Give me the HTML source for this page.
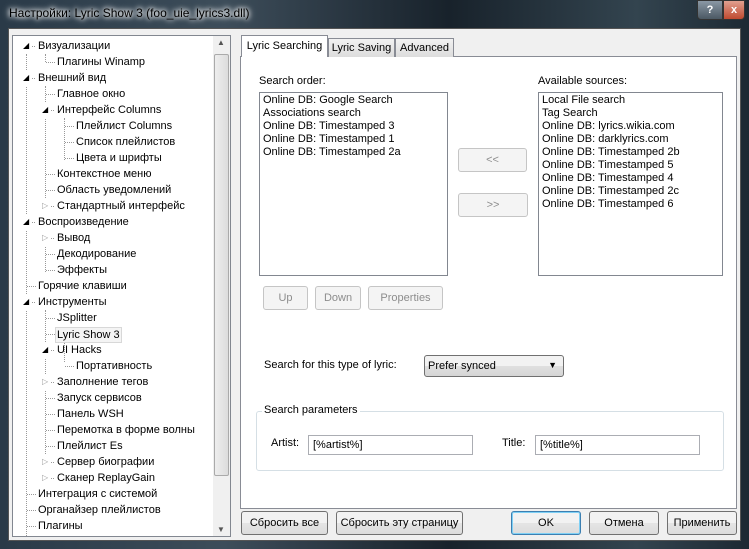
<!DOCTYPE html>
<html><head><meta charset="utf-8"><style>
*{box-sizing:border-box;margin:0;padding:0}
body{width:749px;height:549px;overflow:hidden;background:#1c2630;font-family:"Liberation Sans",sans-serif;font-size:11px;color:#000;position:relative}
.a{position:absolute}
.frame{left:0;top:0;width:749px;height:549px;background:linear-gradient(90deg,#2a3a48,#3d4d5a 30%,#18222b 60%,#33444f 85%,#1d2933)}
.title{left:9px;top:6px;color:#000;font-size:12px;text-shadow:0 0 8px #fff,0 0 6px #fff,0 0 4px #fff}
.body{left:8px;top:28px;width:733px;height:513px;background:#f0f0f0;border:1px solid #555}
.tree{left:12px;top:35px;width:219px;height:502px;background:#fff;border:1px solid #828790}
.ti{position:absolute;white-space:nowrap;line-height:16px;font-size:11px}
.ex{position:absolute;font-size:8px;line-height:16px;background:#fff}
.sb{left:213px;top:36px;width:17px;height:500px;background:#f0f0f0}
.thumb{left:214px;top:54px;width:15px;height:422px;background:linear-gradient(90deg,#eee,#dcdcdc);border:1px solid #aaa;border-radius:2px}
.panel{left:240px;top:56px;width:497px;height:453px;background:#fff;border:1px solid #898c95}
.tab{top:38px;height:19px;background:linear-gradient(#f2f2f2,#dcdcdc);border:1px solid #898c95;border-bottom:none;padding:3px 0 0;text-align:center;white-space:nowrap}
.list{background:#fff;border:1px solid #828790;padding:1px 3px;line-height:13px}
.btn{border:1px solid #acacac;border-radius:3px;background:linear-gradient(#f2f2f2 50%,#e5e5e5 50%,#dcdcdc);text-align:center;line-height:23px;white-space:nowrap}
.dis{color:#8d8d8d;background:#f4f4f4;border-color:#c5c5c5}
.inp{background:#fff;border:1px solid #abadb3;padding:3px 4px;line-height:13px}
.v{position:absolute;border-left:1px dotted #999;width:0}
.h{position:absolute;border-top:1px dotted #999;height:0}
</style></head><body>
<div class="a frame"></div>
<div class="a title">Настройки: Lyric Show 3 (foo_uie_lyrics3.dll)</div>
<div class="a" style="left:697px;top:0;width:26px;height:20px;border:1px solid #333;border-radius:0 0 0 4px;background:linear-gradient(#8a98a5,#4b5863);color:#fff;text-align:center;font-weight:bold;line-height:18px">?</div>
<div class="a" style="left:723px;top:0;width:22px;height:20px;border:1px solid #333;border-radius:0 0 4px 0;background:linear-gradient(#e0a090,#c04a30);color:#fff;text-align:center;font-weight:bold;line-height:18px">x</div>
<div class="a body"></div>
<div class="a tree"></div>
<div class="a" style="left:13px;top:36px;width:200px;height:500px;overflow:hidden">
<div class="v" style="left:13px;top:18px;height:482px"></div>
<div class="v" style="left:32px;top:18px;height:8px"></div>
<div class="v" style="left:32px;top:50px;height:122px"></div>
<div class="v" style="left:51px;top:82px;height:42px"></div>
<div class="v" style="left:32px;top:194px;height:42px"></div>
<div class="v" style="left:32px;top:274px;height:170px"></div>
<div class="v" style="left:51px;top:306px;height:20px"></div>
<div class="ex" style="left:10px;top:2px">◢</div><div class="h" style="left:19px;top:10px;width:3px"></div><div class="ti" style="left:25px;top:2px">Визуализации</div>
<div class="h" style="left:33px;top:26px;width:9px"></div><div class="ti" style="left:44px;top:18px">Плагины Winamp</div>
<div class="ex" style="left:10px;top:34px">◢</div><div class="h" style="left:19px;top:42px;width:3px"></div><div class="ti" style="left:25px;top:34px">Внешний вид</div>
<div class="h" style="left:33px;top:58px;width:9px"></div><div class="ti" style="left:44px;top:50px">Главное окно</div>
<div class="ex" style="left:29px;top:66px">◢</div><div class="h" style="left:38px;top:74px;width:3px"></div><div class="ti" style="left:44px;top:66px">Интерфейс Columns</div>
<div class="h" style="left:52px;top:90px;width:9px"></div><div class="ti" style="left:63px;top:82px">Плейлист Columns</div>
<div class="h" style="left:52px;top:106px;width:9px"></div><div class="ti" style="left:63px;top:98px">Список плейлистов</div>
<div class="h" style="left:52px;top:122px;width:9px"></div><div class="ti" style="left:63px;top:114px">Цвета и шрифты</div>
<div class="h" style="left:33px;top:138px;width:9px"></div><div class="ti" style="left:44px;top:130px">Контекстное меню</div>
<div class="h" style="left:33px;top:154px;width:9px"></div><div class="ti" style="left:44px;top:146px">Область уведомлений</div>
<div class="ex" style="left:29px;top:162px;color:#999">▷</div><div class="h" style="left:38px;top:170px;width:3px"></div><div class="ti" style="left:44px;top:162px">Стандартный интерфейс</div>
<div class="ex" style="left:10px;top:178px">◢</div><div class="h" style="left:19px;top:186px;width:3px"></div><div class="ti" style="left:25px;top:178px">Воспроизведение</div>
<div class="ex" style="left:29px;top:194px;color:#999">▷</div><div class="h" style="left:38px;top:202px;width:3px"></div><div class="ti" style="left:44px;top:194px">Вывод</div>
<div class="h" style="left:33px;top:218px;width:9px"></div><div class="ti" style="left:44px;top:210px">Декодирование</div>
<div class="h" style="left:33px;top:234px;width:9px"></div><div class="ti" style="left:44px;top:226px">Эффекты</div>
<div class="h" style="left:14px;top:250px;width:9px"></div><div class="ti" style="left:25px;top:242px">Горячие клавиши</div>
<div class="ex" style="left:10px;top:258px">◢</div><div class="h" style="left:19px;top:266px;width:3px"></div><div class="ti" style="left:25px;top:258px">Инструменты</div>
<div class="h" style="left:33px;top:282px;width:9px"></div><div class="ti" style="left:44px;top:274px">JSplitter</div>
<div class="h" style="left:33px;top:298px;width:9px"></div><div class="ti" style="left:42px;top:291px;line-height:14px;border:1px solid #d8d8d8;background:#f4f4f4;padding:0 1px">Lyric Show 3</div>
<div class="ex" style="left:29px;top:306px">◢</div><div class="h" style="left:38px;top:314px;width:3px"></div><div class="ti" style="left:44px;top:306px">UI Hacks</div>
<div class="h" style="left:52px;top:330px;width:9px"></div><div class="ti" style="left:63px;top:322px">Портативность</div>
<div class="ex" style="left:29px;top:338px;color:#999">▷</div><div class="h" style="left:38px;top:346px;width:3px"></div><div class="ti" style="left:44px;top:338px">Заполнение тегов</div>
<div class="h" style="left:33px;top:362px;width:9px"></div><div class="ti" style="left:44px;top:354px">Запуск сервисов</div>
<div class="h" style="left:33px;top:378px;width:9px"></div><div class="ti" style="left:44px;top:370px">Панель WSH</div>
<div class="h" style="left:33px;top:394px;width:9px"></div><div class="ti" style="left:44px;top:386px">Перемотка в форме волны</div>
<div class="h" style="left:33px;top:410px;width:9px"></div><div class="ti" style="left:44px;top:402px">Плейлист Es</div>
<div class="ex" style="left:29px;top:418px;color:#999">▷</div><div class="h" style="left:38px;top:426px;width:3px"></div><div class="ti" style="left:44px;top:418px">Сервер биографии</div>
<div class="ex" style="left:29px;top:434px;color:#999">▷</div><div class="h" style="left:38px;top:442px;width:3px"></div><div class="ti" style="left:44px;top:434px">Сканер ReplayGain</div>
<div class="h" style="left:14px;top:458px;width:9px"></div><div class="ti" style="left:25px;top:450px">Интеграция с системой</div>
<div class="h" style="left:14px;top:474px;width:9px"></div><div class="ti" style="left:25px;top:466px">Органайзер плейлистов</div>
<div class="h" style="left:14px;top:490px;width:9px"></div><div class="ti" style="left:25px;top:482px">Плагины</div>
</div>
<div class="a sb"></div>
<div class="a thumb"></div>
<div class="a" style="left:217px;top:38px;font-size:8px;color:#555">▲</div>
<div class="a" style="left:217px;top:525px;font-size:8px;color:#555">▼</div>

<div class="a panel"></div>
<div class="a tab" style="left:328px;width:67px">Lyric Saving</div>
<div class="a tab" style="left:395px;width:59px">Advanced</div>
<div class="a tab" style="left:241px;top:35px;height:22px;width:87px;background:#fff;padding-top:4px">Lyric Searching</div>

<div class="a" style="left:259px;top:75px">Search order:</div>
<div class="a" style="left:538px;top:75px">Available sources:</div>
<div class="a list" style="left:259px;top:92px;width:189px;height:184px">Online DB: Google Search<br>Associations search<br>Online DB: Timestamped 3<br>Online DB: Timestamped 1<br>Online DB: Timestamped 2a</div>
<div class="a list" style="left:538px;top:92px;width:185px;height:184px">Local File search<br>Tag Search<br>Online DB: lyrics.wikia.com<br>Online DB: darklyrics.com<br>Online DB: Timestamped 2b<br>Online DB: Timestamped 5<br>Online DB: Timestamped 4<br>Online DB: Timestamped 2c<br>Online DB: Timestamped 6</div>
<div class="a btn dis" style="left:458px;top:148px;width:69px;height:24px">&lt;&lt;</div>
<div class="a btn dis" style="left:458px;top:193px;width:70px;height:24px">&gt;&gt;</div>
<div class="a btn dis" style="left:263px;top:286px;width:45px;height:24px">Up</div>
<div class="a btn dis" style="left:315px;top:286px;width:46px;height:24px">Down</div>
<div class="a btn dis" style="left:368px;top:286px;width:75px;height:24px">Properties</div>

<div class="a" style="left:264px;top:359px">Search for this type of lyric:</div>
<div class="a" style="left:424px;top:355px;width:140px;height:22px;border:1px solid #707070;border-radius:3px;background:linear-gradient(#f2f2f2 50%,#e0e0e0 50%,#d5d5d5);padding:4px 3px">Prefer synced<span style="position:absolute;right:6px;top:4px;font-size:9px">▼</span></div>

<div class="a" style="left:256px;top:411px;width:468px;height:60px;border:1px solid #d5dfe5;border-radius:3px"></div>
<div class="a" style="left:262px;top:404px;background:#fff;padding:0 2px">Search parameters</div>
<div class="a" style="left:271px;top:437px">Artist:</div>
<div class="a inp" style="left:308px;top:435px;width:165px;height:20px">[%artist%]</div>
<div class="a" style="left:502px;top:437px">Title:</div>
<div class="a inp" style="left:535px;top:435px;width:165px;height:20px">[%title%]</div>

<div class="a btn" style="left:241px;top:511px;width:87px;height:24px;border-color:#707070">Сбросить все</div>
<div class="a btn" style="left:336px;top:511px;width:127px;height:24px;border-color:#707070">Сбросить эту страницу</div>
<div class="a btn" style="left:511px;top:511px;width:70px;height:24px;border-color:#3c7fb1;box-shadow:inset 0 0 0 1px #7ed0f5">OK</div>
<div class="a btn" style="left:589px;top:511px;width:70px;height:24px;border-color:#707070">Отмена</div>
<div class="a btn" style="left:667px;top:511px;width:70px;height:24px;border-color:#707070">Применить</div>
</body></html>
